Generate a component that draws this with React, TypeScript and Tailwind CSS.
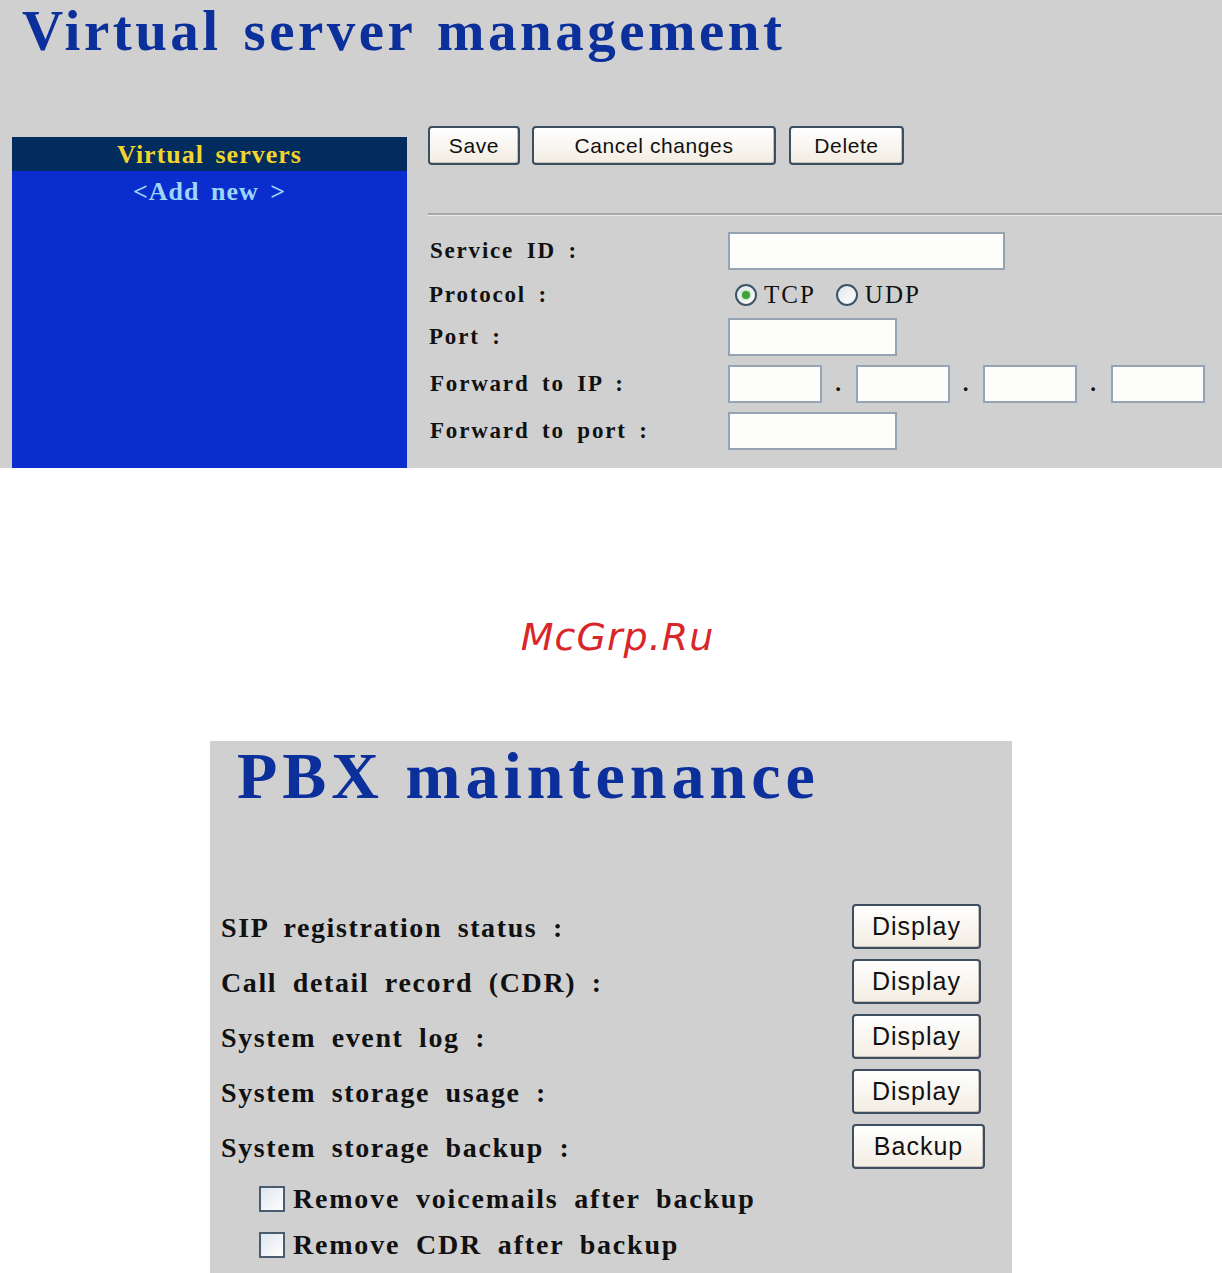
import React from "react";

const serif = "font-['Liberation_Serif','Times_New_Roman',serif]";
const sans = "font-['Liberation_Sans',Arial,sans-serif]";

function PanelButton({ label, className }: { label: string; className: string }) {
    return (
        <button
            className={`${sans} ${className} rounded-[4px] border-2 border-[#3c4e60] bg-gradient-to-b from-white to-[#f3ede2] text-[#111] shadow-[inset_-1px_-1px_0_#c8c0b4]`}
        >
            {label}
        </button>
    );
}

function TextBox({ className }: { className: string }) {
    return <div className={`${className} h-[38px] border-2 border-[#95a3b3] bg-[#fdfdfc]`} />;
}

function Radio({ checked }: { checked?: boolean }) {
    return (
        <span className="flex h-[22px] w-[22px] items-center justify-center rounded-full border-2 border-[#3c5468] bg-gradient-to-br from-[#e2e6ea] to-white">
            {checked && <span className="h-[8px] w-[8px] rounded-full bg-[#3fa33a] shadow-[0_0_3px_#7ccf6f]" />}
        </span>
    );
}

function VirtualServers() {
    return (
        <section className="h-[468px] bg-[#d0d0d0]">
            <h1
                className={`${serif} pl-[22px] pt-[2px] text-[57px] leading-none font-bold tracking-[3.5px] [word-spacing:4px] text-[#0b2f9b]`}
            >
                Virtual server management
            </h1>

            <div className="mt-[67px] flex">
                {/* left list */}
                <div className="ml-[12px] mt-[11px] h-[331px] w-[395px] bg-[#0a2dcd]">
                    <div
                        className={`${serif} flex h-[34px] items-center justify-center bg-[#022b5e] text-[26px] font-bold tracking-[1px] text-[#f2d42a] [word-spacing:4px]`}
                    >
                        Virtual servers
                    </div>
                    <div
                        className={`${serif} pt-[1px] text-center text-[26px] font-bold tracking-[1px] text-[#9cd6fb] [word-spacing:4px]`}
                    >
                        &lt;Add new &gt;
                    </div>
                </div>

                {/* editor */}
                <div className="ml-[21px] flex-1">
                    <div className="flex gap-[12px] text-[21px] tracking-[0.6px]">
                        <PanelButton label="Save" className="h-[39px] w-[92px]" />
                        <PanelButton label="Cancel changes" className="h-[39px] w-[244px]" />
                        <PanelButton label="Delete" className="ml-[1px] h-[39px] w-[115px]" />
                    </div>

                    <div className="mt-[48px] border-t-2 border-[#a8a8a8] shadow-[0_1px_0_#ececec]" />

                    <div
                        className={`${serif} mt-[17px] grid grid-cols-[300px_1fr] items-center text-[23px] font-bold tracking-[1.8px] text-[#111] [word-spacing:5px]`}
                    >
                        <div className="pl-[2px] pt-[1px]">Service ID :</div>
                        <TextBox className="w-[277px]" />

                        <div className="flex h-[48px] items-center pl-[1px] pt-[2px]">Protocol :</div>
                        <div className="flex h-[48px] items-center pl-[7px] pt-[2px] text-[25px] font-normal tracking-[2px]">
                            <Radio checked />
                            <span className="ml-[7px]">TCP</span>
                            <span className="ml-[20px]">
                                <Radio />
                            </span>
                            <span className="ml-[7px]">UDP</span>
                        </div>

                        <div className="pl-[1px]">Port :</div>
                        <TextBox className="w-[169px]" />

                        <div className="mt-[9px] pl-[2px]">Forward to IP :</div>
                        <div className="mt-[9px] flex items-end">
                            <TextBox className="w-[94px]" />
                            <span className="w-[34px] pb-[2px] text-center">.</span>
                            <TextBox className="w-[94px]" />
                            <span className="w-[33px] pb-[2px] text-center">.</span>
                            <TextBox className="w-[94px]" />
                            <span className="w-[34px] pb-[2px] text-center">.</span>
                            <TextBox className="w-[94px]" />
                        </div>

                        <div className="mt-[9px] pl-[2px]">Forward to port :</div>
                        <TextBox className="mt-[9px] w-[169px]" />
                    </div>
                </div>
            </div>
        </section>
    );
}

function PbxMaintenance() {
    const items = [
        { label: "SIP registration status :", button: "Display" },
        { label: "Call detail record (CDR) :", button: "Display" },
        { label: "System event log :", button: "Display" },
        { label: "System storage usage :", button: "Display" },
        { label: "System storage backup :", button: "Backup" },
    ];

    return (
        <section className="ml-[210px] h-[532px] w-[802px] bg-[#d0d0d0]">
            <h2
                className={`${serif} pl-[27px] pt-[2px] text-[66px] leading-none font-bold tracking-[5px] text-[#0b2f9b]`}
            >
                PBX maintenance
            </h2>

            <div className="mt-[95px] flex flex-col gap-[10px]">
                {items.map((item) => (
                    <div key={item.label} className="flex h-[45px] items-center">
                        <div
                            className={`${serif} w-[642px] pl-[11px] pt-[2px] text-[28px] font-bold tracking-[1.6px] text-[#111] [word-spacing:7px]`}
                        >
                            {item.label}
                        </div>
                        <PanelButton
                            label={item.button}
                            className={`h-[45px] text-[25px] tracking-[1px] ${item.button === "Backup" ? "w-[133px]" : "w-[129px]"}`}
                        />
                    </div>
                ))}
            </div>

            <div
                className={`${serif} mt-[17px] flex flex-col gap-[20px] pl-[49px] text-[28px] font-bold tracking-[1.8px] text-[#111] [word-spacing:7px]`}
            >
                {["Remove voicemails after backup", "Remove CDR after backup"].map((t) => (
                    <label key={t} className="flex h-[26px] items-center">
                        <span className="h-[26px] w-[26px] border-2 border-[#4a5d70] bg-gradient-to-br from-[#dfe6ee] to-white" />
                        <span className="ml-[8px] leading-none">{t}</span>
                    </label>
                ))}
            </div>
        </section>
    );
}

export default function App() {
    return (
        <div className="h-[1273px] w-[1222px] overflow-hidden bg-white">
            <VirtualServers />

            <div className="flex h-[273px] items-center justify-center pl-[13px] pt-[66px]">
                <span className="font-['DejaVu_Sans',sans-serif] text-[38px] italic tracking-[1px] text-[#d8262a]">
                    McGrp.Ru
                </span>
            </div>

            <PbxMaintenance />
        </div>
    );
}
